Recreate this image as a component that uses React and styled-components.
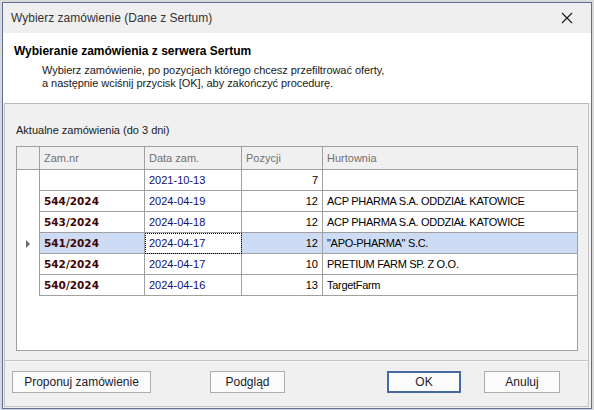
import React from "react";
import styled, { createGlobalStyle } from "styled-components";

const GlobalStyle = createGlobalStyle`
  html, body {
    margin: 0;
    padding: 0;
    background: #d9d9d9;
    font-family: "Liberation Sans", Arial, sans-serif;
    font-size: 11px;
    color: #000;
  }
  * { box-sizing: border-box; }
`;

const orders = [
  { nr: "", date: "2021-10-13", qty: 7, store: "" },
  { nr: "544/2024", date: "2024-04-19", qty: 12, store: "ACP PHARMA S.A. ODDZIAŁ KATOWICE" },
  { nr: "543/2024", date: "2024-04-18", qty: 12, store: "ACP PHARMA S.A. ODDZIAŁ KATOWICE" },
  { nr: "541/2024", date: "2024-04-17", qty: 12, store: "\"APO-PHARMA\" S.C.", selected: true },
  { nr: "542/2024", date: "2024-04-17", qty: 10, store: "PRETIUM FARM SP. Z O.O." },
  { nr: "540/2024", date: "2024-04-16", qty: 13, store: "TargetFarm" },
];

const App = () => {
  return (
    <>
      <GlobalStyle />
      <Window>
        <TitleBar>
          <TitleText>Wybierz zamówienie (Dane z Sertum)</TitleText>
          <CloseButton>
            <svg width="12" height="12" viewBox="0 0 12 12">
              <path d="M1 1 L11 11 M11 1 L1 11" stroke="#1a1a1a" strokeWidth="1.1" fill="none" />
            </svg>
          </CloseButton>
        </TitleBar>

        <Header>
          <HeaderTitle>Wybieranie zamówienia z serwera Sertum</HeaderTitle>
          <HeaderText>
            Wybierz zamówienie, po pozycjach którego chcesz przefiltrować oferty,
            <br />
            a następnie wciśnij przycisk [OK], aby zakończyć procedurę.
          </HeaderText>
        </Header>

        <Content>
          <GroupPanel>
            <GroupLabel>Aktualne zamówienia (do 3 dni)</GroupLabel>
            <Grid>
              <HeadRow>
                <HeadCell $w={23} />
                <HeadCell $w={105}>Zam.nr</HeadCell>
                <HeadCell $w={97}>Data zam.</HeadCell>
                <HeadCell $w={81}>Pozycji</HeadCell>
                <HeadCell $grow>Hurtownia</HeadCell>
              </HeadRow>
              {orders.map((o, i) => (
                <Row key={i} $selected={o.selected}>
                  <RowHeader>
                    {o.selected && (
                      <svg width="5" height="8" viewBox="0 0 5 8">
                        <path d="M0 0 L4 4 L0 8 Z" fill="#6a6a6a" />
                      </svg>
                    )}
                  </RowHeader>
                  <Cell $w={105} $kind="nr">{o.nr}</Cell>
                  <Cell $w={97} $kind="date" $focus={o.selected}>{o.date}</Cell>
                  <Cell $w={81} $right>{o.qty}</Cell>
                  <Cell $grow $kind="store">{o.store}</Cell>
                </Row>
              ))}
            </Grid>
          </GroupPanel>

          <Footer>
            <Button $ml={7} $w={139}>Proponuj zamówienie</Button>
            <Button $ml={59} $w={75}>Podgląd</Button>
            <Button $ml={102} $w={74} $default>OK</Button>
            <Button $ml={23} $w={76}>Anuluj</Button>
          </Footer>
        </Content>
      </Window>
    </>
  );
};

export default App;

// Styles
const Window = styled.div`
  margin: 2px 2px 0 2px;
  width: 590px;
  height: 407px;
  border: 1px solid #5d6f92;
  background: #f0f0f0;
  display: flex;
  flex-direction: column;
`;

const TitleBar = styled.div`
  height: 30px;
  background: #efefef;
  display: flex;
  align-items: center;
  justify-content: space-between;
  padding: 0 8px 0 8px;
`;

const TitleText = styled.span`
  font-size: 12px;
  color: #333;
  font-family: "Liberation Sans", Arial, sans-serif;
`;

const CloseButton = styled.div`
  width: 24px;
  height: 20px;
  display: flex;
  align-items: center;
  justify-content: center;
  margin-right: 4px;
`;

const Header = styled.div`
  height: 70px;
  background: #fff;
  padding: 11px 0 0 11px;
`;

const HeaderTitle = styled.div`
  font-weight: bold;
  font-size: 12px;
  line-height: 14px;
  color: #000;
`;

const HeaderText = styled.div`
  margin: 6px 0 0 28px;
  font-size: 11px;
  line-height: 13px;
  color: #1a1a1a;
  letter-spacing: -0.05px;
`;

const Content = styled.div`
  flex: 1;
  margin: 0 2px 1px 1px;
  border: 1px solid #c4c4c4;
  border-top-color: #b9b9b9;
  display: flex;
  flex-direction: column;
`;

const GroupPanel = styled.div`
  height: 257px;
  border-bottom: 1px solid #c4c4c4;
  box-shadow: 0 1px 0 #fafafa;
  padding: 20px 10px 0 11px;
`;

const GroupLabel = styled.div`
  font-size: 11px;
  line-height: 13px;
  color: #1a1a1a;
  margin-bottom: 9px;
`;

const Grid = styled.div`
  width: 562px;
  height: 205px;
  border: 1px solid #a0a0a0;
  background: #fff;
`;

const HeadRow = styled.div`
  display: flex;
  height: 23px;
  background: #f0f0f0;
  border-bottom: 1px solid #a0a0a0;
`;

const HeadCell = styled.div`
  width: ${(p) => (p.$grow ? "auto" : `${p.$w}px`)};
  flex: ${(p) => (p.$grow ? 1 : "none")};
  border-right: ${(p) => (p.$grow ? "none" : "1px solid #a0a0a0")};
  color: #707070;
  padding-left: 4px;
  display: flex;
  align-items: center;
`;

const Row = styled.div`
  display: flex;
  height: 21px;
  background: ${(p) => (p.$selected ? "#cddcf4" : "#fff")};
`;

const RowHeader = styled.div`
  width: 23px;
  flex: none;
  background: #fff;
  border-right: 1px solid #a0a0a0;
  display: flex;
  align-items: center;
  justify-content: center;
`;

const cellColors = { nr: "#3f0606", date: "#101070", store: "#000" };

const Cell = styled.div`
  width: ${(p) => (p.$grow ? "auto" : `${p.$w}px`)};
  flex: ${(p) => (p.$grow ? 1 : "none")};
  border-right: ${(p) => (p.$grow ? "none" : "1px solid #a0a0a0")};
  border-bottom: 1px solid #a0a0a0;
  display: flex;
  align-items: center;
  justify-content: ${(p) => (p.$right ? "flex-end" : "flex-start")};
  padding: 0 4px 0 4px;
  white-space: nowrap;
  font-family: ${(p) => (p.$kind === "nr" ? '"DejaVu Sans", Verdana, sans-serif' : '"Liberation Sans", Arial, sans-serif')};
  font-weight: ${(p) => (p.$kind === "nr" ? "bold" : "normal")};
  font-size: ${(p) => (p.$kind === "nr" ? "10.5px" : "11px")};
  letter-spacing: ${(p) => (p.$kind === "store" ? "-0.3px" : "0")};
  color: ${(p) => cellColors[p.$kind] || "#000"};
  background: ${(p) => (p.$focus ? "#fff" : "transparent")};
  outline: ${(p) => (p.$focus ? "1px dotted #000" : "none")};
  outline-offset: -1px;
`;

const Footer = styled.div`
  flex: 1;
  display: flex;
  align-items: center;
  padding-bottom: 3px;
`;

const Button = styled.div`
  margin-left: ${(p) => p.$ml}px;
  width: ${(p) => p.$w}px;
  height: 22px;
  background: #fbfbfb;
  border: ${(p) => (p.$default ? "2px solid #4768a0" : "1px solid #adadad")};
  display: flex;
  align-items: center;
  justify-content: center;
  font-size: 12px;
  color: #1c1c2c;
`;
